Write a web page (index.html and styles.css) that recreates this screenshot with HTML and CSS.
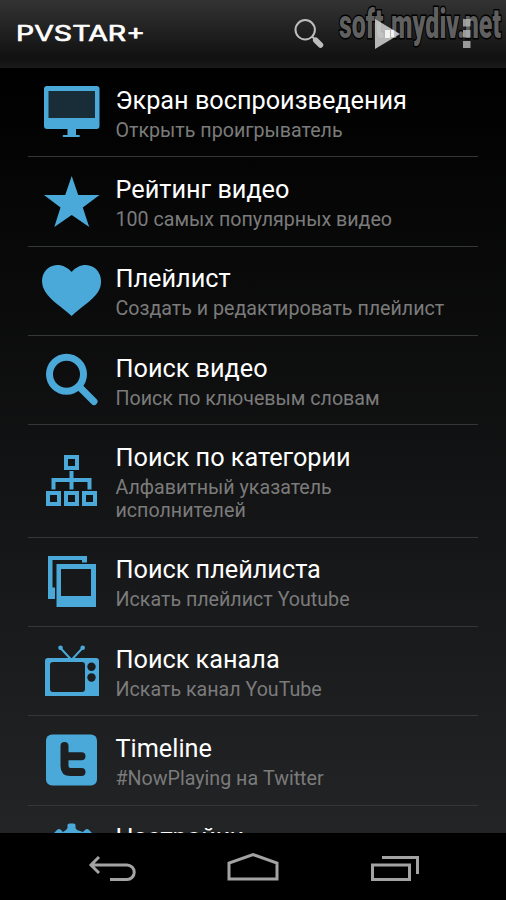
FILE: index.html
```html
<!DOCTYPE html>
<html lang="ru">
<head>
<meta charset="utf-8">
<title>PVSTAR+</title>
<link rel="stylesheet" href="styles.css">
</head>
<body>
<div class="screen">
<header class="bar">
  <svg class="bar-art" viewBox="0 0 506 68">
    <text class="logo" x="16" y="41.3" textLength="129" lengthAdjust="spacingAndGlyphs">PVSTAR+</text>
    <circle cx="305.2" cy="29.800" r="9.700" fill="none" stroke="#bdbdbd" stroke-width="2"/>
    <path d="M312 36.500l3 3" stroke="#bdbdbd" stroke-width="2"/>
    <path d="M315.700 40.200l4.800 4.800" stroke="#bdbdbd" stroke-width="5.500" stroke-linecap="round"/>
    <text class="watermark" x="339" y="37.500" textLength="162" lengthAdjust="spacingAndGlyphs">soft.mydiv.net</text>
    <path d="M375 19v30l25-15z" fill="#d4d4d4" opacity=".85"/>
    <path d="M385 30h5v8h-5zM391 30h3v7h-3z" fill="#fff" opacity=".8"/>
    <path d="M463 19h7.500v7.500h-7.500zM463 30h7.500v7.500h-7.500zM463 41h7.500v7h-7.500z" fill="#b0b0b0" opacity=".85"/>
  </svg>
</header>
<main class="list">
  <section class="row">
    <svg class="icon" viewBox="42 82 60 60"><rect x="44" y="86" width="55.500" height="43" rx="3"/><rect x="48.500" y="91" width="46.500" height="27" fill="#192d38"/><path d="M67.500 129h8.500v6h3.500q1 2-1 2h-15q-1.500 0-.5-2h4.500z"/></svg>
    <div class="text"><h2>Экран воспроизведения</h2><p>Открыть проигрыватель</p></div>
  </section>
  <section class="row">
    <svg class="icon" viewBox="42 171 60 60"><path d="M71.700 176l6.500 19H99.500L82.800 207.500 89.200 227 71.700 215 54.300 227 60.500 207.500 44 195H65.200z"/></svg>
    <div class="text"><h2>Рейтинг видео</h2><p>100 самых популярных видео</p></div>
  </section>
  <section class="row">
    <svg class="icon" viewBox="42 261 60 60"><path d="M71.600 272C66 265 56 262.500 49 267.500 41 273 40 284 45.500 292 51 301 62 307 71.600 316 81 307 92 301 98 292 103 284 102 273 94 267.500 87 262.500 77 265 71.600 272z"/></svg>
    <div class="text"><h2>Плейлист</h2><p>Создать и редактировать плейлист</p></div>
  </section>
  <section class="row">
    <svg class="icon" viewBox="42 350 60 60"><circle cx="66.500" cy="374.300" r="17" fill="none" stroke="#4aa9d8" stroke-width="7"/><path d="M79.500 387L94 401.500" stroke="#4aa9d8" stroke-width="7" stroke-linecap="round"/></svg>
    <div class="text"><h2>Поиск видео</h2><p>Поиск по ключевым словам</p></div>
  </section>
  <section class="row tall">
    <svg class="icon" viewBox="42 451 60 60"><path fill="none" stroke="#4aa9d8" stroke-width="4" d="M66 457h11v11H66zM48 493h11v11H48zM66 493h11v11H66zM84 493h11v11H84zM71.500 471v18.500M53.500 489.500V480h36v9.500"/></svg>
    <div class="text"><h2>Поиск по категории</h2><p>Алфавитный указатель<br>исполнителей</p></div>
  </section>
  <section class="row">
    <svg class="icon" viewBox="42 552 60 60"><path fill-rule="evenodd" d="M48 556h39v6.500h-5V560H52.500v27.500H55V599h-7zM56.500 564H96v43H56.500zM61 569v27h30v-27z"/></svg>
    <div class="text"><h2>Поиск плейлиста</h2><p>Искать плейлист Youtube</p></div>
  </section>
  <section class="row">
    <svg class="icon" viewBox="42 641 60 60"><path fill-rule="evenodd" d="M48 658h48q3 0 3 3v35H45v-35q0-3 3-3zM53 662q-3 0-3 3v24q0 3 3 3h29q3 0 3-3v-24q0-3-3-3z"/><circle cx="91.500" cy="666.800" r="4.200" fill="#1b1c1d"/><circle cx="91.500" cy="677.500" r="4.200" fill="#1b1c1d"/><path d="M60.500 648L71.500 660 82.500 648" fill="none" stroke="#4aa9d8" stroke-width="2"/><circle cx="60.500" cy="647.800" r="2.300"/><circle cx="82.700" cy="647.800" r="2.300"/></svg>
    <div class="text"><h2>Поиск канала</h2><p>Искать канал YouTube</p></div>
  </section>
  <section class="row">
    <svg class="icon" viewBox="42 730 60 60"><rect x="46" y="734.500" width="51" height="51" rx="6"/><path d="M64.500 746v20q0 6 6 6h11M65 756.300h16.500" fill="none" stroke="#1e1f20" stroke-width="8" stroke-linecap="round"/></svg>
    <div class="text"><h2>Timeline</h2><p>#NowPlaying на Twitter</p></div>
  </section>
  <section class="row">
    <svg class="icon" viewBox="42 820 60 60"><path d="M66 830l1.500-2V825q0-1.500 2-1.500h4q2 0 2 1.500v3l1.500 2 6 2 2-2q2-2 4 0l3 3q2 2 0 4l-2 2 3 7h3q2 0 2 2v5q0 2-2 2h-3l-3 7 2 2-6 6-3-2-6 3v4h-8v-4l-6-3-3 2-6-6 2-2-3-7h-3q-2 0-2-2v-5q0-2 2-2h3l3-7-2-2q-2-2 0-4l3-3q2-2 4 0l2 2z"/></svg>
    <div class="text"><h2>Настройки</h2></div>
  </section>
</main>
<nav class="nav">
  <svg viewBox="0 833 506 67" fill="none" stroke="#a3a3a3" stroke-width="3"><path d="M99 857L91 865l8 8M91 865h36a7 7 0 0 1 0 14.500h-17M229 879V863l24-8.500L277 863v16zM372.500 865h37v14.500h-37zM382 857.500h35.500V874"/></svg>
</nav>
</div>
</body>
</html>
```
FILE: styles.css
```css
* { box-sizing: border-box; }
body { margin: 0; background: #000; font-family: Roboto, "Noto Sans", sans-serif; }
.screen { display: flex; flex-direction: column; width: 506px; height: 900px; overflow: hidden; }
.bar { flex: 0 0 68px; background: linear-gradient(#333 0, #111 85%, #1a1a1a 100%); }
.bar-art { display: block; width: 506px; height: 68px; }
.logo { font: 400 21.5px Inter, sans-serif; fill: #fff; stroke: #fff; stroke-width: .7px; stroke-linejoin: round; }
.watermark { font: 900 40px Roboto, sans-serif; fill: #606060; stroke: #000; stroke-width: 3px; paint-order: stroke; }
.list { flex: 0 0 765px; overflow: hidden; padding: 0 28px; background: linear-gradient(#000, #232426); }
.row { display: flex; align-items: center; height: 89.3px; padding-left: 14px; border-bottom: 1px solid #353638; }
.tall { height: 112.5px; }
.icon { width: 60px; height: 60px; margin-right: 13.5px; fill: #4aa9d8; flex: none; }
.text { align-self: flex-start; padding-top: 16.7px; white-space: nowrap; }
h2 { margin: 0; font-size: 25.25px; line-height: 32px; font-weight: 400; color: #fff; }
p { margin: 2px 0 0; font-size: 19.65px; line-height: 23.3px; color: #7b7b7b; }
.nav { flex: 0 0 67px; background: #000; }
.nav svg { display: block; width: 506px; height: 67px; }
```
